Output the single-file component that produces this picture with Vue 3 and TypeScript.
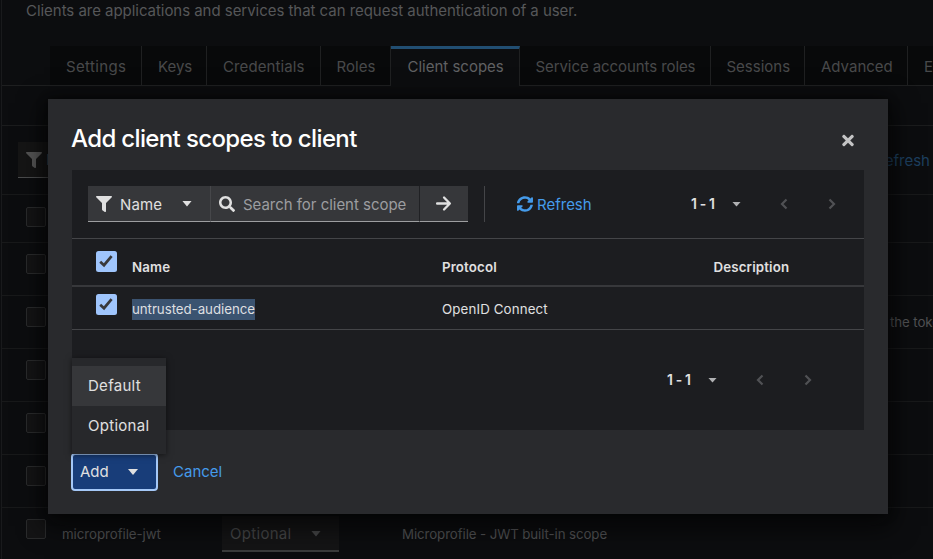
<script setup lang="ts">
import { ref } from 'vue'

interface Tab { label: string; key: string }
interface ScopeRow { name?: string; type?: string; description?: string; key: string }

const tabs: Tab[] = [
  { label: 'Settings', key: 'settings' },
  { label: 'Keys', key: 'keys' },
  { label: 'Credentials', key: 'credentials' },
  { label: 'Roles', key: 'roles' },
  { label: 'Client scopes', key: 'scopes' },
  { label: 'Service accounts roles', key: 'service' },
  { label: 'Sessions', key: 'sessions' },
  { label: 'Advanced', key: 'advanced' },
  { label: 'Events', key: 'events' },
]
const activeTab = ref('scopes')

const rows: ScopeRow[] = [
  { key: 'head' },
  { key: 'first' },
  { key: 'token', description: 'the token' },
  { key: 'r3' },
  { key: 'r4' },
  { key: 'r5' },
  { key: 'jwt', name: 'microprofile-jwt', type: 'Optional', description: 'Microprofile - JWT built-in scope' },
]

const addOptions = ['Default', 'Optional']
const highlighted = ref('Default')
const columns = ['Name', 'Protocol', 'Description']
</script>

<template>
  <div class="screen">
    <main class="page">
      <p class="subtitle"><span>Clients are applications and services that can request authentication of a user.</span></p>
      <nav class="tabs">
        <button
          v-for="tab in tabs"
          :key="tab.key"
          class="tab"
          :class="[`tab-${tab.key}`, { active: tab.key === activeTab }]"
          @click="activeTab = tab.key"
        >{{ tab.label }}</button>
      </nav>
      <div class="strip"></div>
      <div class="page-toolbar">
        <div class="page-filter">
          <svg class="filter-icon" viewBox="0 0 512 512"><path d="M488 0H24C3 0-8 26 7 41l185 185v206c0 8 4 15 10 20l80 56c16 11 38 0 38-20V226L505 41c15-15 4-41-17-41z" /></svg>
          <span>Name</span>
        </div>
        <span class="page-refresh">Refresh</span>
      </div>
      <div v-for="row in rows" :key="row.key" class="scope-row" :class="`row-${row.key}`">
        <span class="ghost-box"></span>
        <span class="scope-name">{{ row.name }}</span>
        <span v-if="row.type" class="scope-type">{{ row.type }}<i class="caret"></i></span>
        <span v-if="row.description" class="scope-desc">{{ row.description }}</span>
      </div>
    </main>

    <section class="modal" role="dialog">
      <header class="modal-head">
        <h1>Add client scopes to client</h1>
        <svg class="close" viewBox="0 0 352 512"><path d="M243 256l100-100c12-12 12-32 0-44l-22-23c-13-12-33-12-45 0L176 189 76 89c-12-12-32-12-45 0L9 112c-12 12-12 32 0 44l100 100L9 356c-12 12-12 32 0 45l22 22c13 12 33 12 45 0l100-100 100 100c12 12 32 12 45 0l22-22c12-13 12-33 0-45z" /></svg>
      </header>

      <div class="panel">
        <div class="toolbar">
          <div class="control filter">
            <svg class="filter-icon" viewBox="0 0 512 512"><path d="M488 0H24C3 0-8 26 7 41l185 185v206c0 8 4 15 10 20l80 56c16 11 38 0 38-20V226L505 41c15-15 4-41-17-41z" /></svg>
            <span class="filter-label">Name</span>
            <i class="caret"></i>
          </div>
          <div class="control search">
            <svg class="search-icon" viewBox="0 0 512 512"><path d="M505 443L405 343c-4-4-10-7-17-7h-16c28-35 44-80 44-128C416 93 323 0 208 0S0 93 0 208s93 208 208 208c48 0 93-16 128-44v16c0 7 3 13 7 17l100 100c9 9 24 9 34 0l28-28c9-10 9-25 0-34zM208 336c-71 0-128-57-128-128S137 80 208 80s128 57 128 128-57 128-128 128z" /></svg>
            <span class="placeholder">Search for client scope</span>
          </div>
          <div class="control go">
            <svg class="arrow" viewBox="0 0 16 16"><path d="M2 8h11.500M8.500 2.400l5.500 5.600-5.500 5.600" /></svg>
          </div>
          <span class="divider"></span>
          <button class="refresh">
            <svg viewBox="0 0 512 512"><path d="M371 133c-33-31-76-47-121-47-82 0-153 56-172 134-1 6-6 10-12 10H9c-7 0-13-7-12-14C19 96 127 8 256 8c69 0 131 27 178 71l36-36c15-15 41-4 41 17v134c0 13-11 24-24 24H353c-21 0-32-26-17-41zM25 296h134c21 0 32 26 17 41l-41 41c32 31 75 48 120 48 78 0 150-54 171-134 2-6 7-10 12-10h57c8 0 14 7 12 14-22 120-125 208-251 208-69 0-131-27-178-71l-37 36C26 484 1 473 1 452V320c0-13 11-24 24-24z" /></svg>
            <span>Refresh</span>
          </button>
          <div class="pager">
            <b>1 - 1</b><i class="caret"></i>
            <svg class="angle" viewBox="0 0 8 12"><path d="M6.500 1.500L2 6l4.500 4.500" /></svg>
            <svg class="angle" viewBox="0 0 8 12"><path d="M1.500 1.500L6 6l-4.500 4.500" /></svg>
          </div>
        </div>

        <div class="grid-row grid-head">
          <span class="check"><svg viewBox="0 0 16 16"><path d="M2.200 8.700l3.800 3.500 7.600-9" /></svg></span>
          <b v-for="column in columns" :key="column" :class="`col-${column.toLowerCase()}`">{{ column }}</b>
        </div>
        <div class="grid-row grid-item">
          <span class="check"><svg viewBox="0 0 16 16"><path d="M2.200 8.700l3.800 3.500 7.600-9" /></svg></span>
          <span><mark>untrusted-audience</mark></span>
          <span class="protocol">OpenID Connect</span>
          <span></span>
        </div>

        <div class="bottom">
          <div class="pager">
            <b>1 - 1</b><i class="caret"></i>
            <svg class="angle" viewBox="0 0 8 12"><path d="M6.500 1.500L2 6l4.500 4.500" /></svg>
            <svg class="angle" viewBox="0 0 8 12"><path d="M1.500 1.500L6 6l-4.500 4.500" /></svg>
          </div>
        </div>
      </div>

      <footer class="actions">
        <div class="add-wrap">
          <button class="add"><span>Add</span><i class="caret"></i></button>
          <ul class="menu">
            <li
              v-for="option in addOptions"
              :key="option"
              :class="{ highlighted: option === highlighted }"
              @mouseenter="highlighted = option"
            >{{ option }}</li>
          </ul>
        </div>
        <button class="cancel">Cancel</button>
      </footer>
    </section>
  </div>
</template>

<style>
body { background: #0c0d0f; overflow: hidden; }
</style>

<style scoped>
* { box-sizing: border-box; }
.screen {
  position: relative;
  width: 933px;
  height: 559px;
  overflow: hidden;
  background: #0c0d0f;
  font: 15px/24px Inter, "Liberation Sans", sans-serif;
  color: #e0e0e0;
}
button { font: inherit; color: inherit; background: none; border: 0; padding: 0; margin: 0; text-align: left; white-space: nowrap; }
svg { display: block; flex: none; fill: currentColor; }
.caret {
  display: block;
  flex: none;
  width: 10px;
  height: 6px;
  background: currentColor;
  clip-path: polygon(0 0, 100% 0, 50% 100%);
}

.page { height: 559px; margin-left: 1px; border-left: 1px solid #191a1c; color: #58595b; }
.subtitle { margin: 0; height: 46px; padding: 0 0 0 24px; line-height: 21px; letter-spacing: -0.040px; white-space: nowrap; color: #565759; }
.tabs { display: flex; height: 40px; padding-left: 48px; border-bottom: 1px solid #1e1f20; }
.tab { flex: none; height: 39px; padding-left: 16px; padding-top: 1px; line-height: 39px; background: #08090a; border-right: 1px solid #1f2021; color: #48494b; overflow: hidden; }
.tab.active { height: 40px; padding-top: 0; background: #0c0d0f; border-top: 3px solid #214e72; line-height: 35px; padding-bottom: 2px; padding-left: 16.500px; color: #606163; }
.tab-settings { width: 92px; letter-spacing: 0.350px; }
.tab-keys { width: 65px; }
.tab-credentials { width: 114px; letter-spacing: 0.100px; }
.tab-roles { width: 70px; letter-spacing: 0.050px; padding-left: 15.500px; }
.tab-scopes { width: 129px; }
.tab-service { width: 191px; letter-spacing: -0.080px; padding-left: 15.500px; }
.tab-sessions { width: 94px; padding-left: 15.500px; }
.tab-advanced { width: 103px; }
.tab-events { width: 90px; }
.strip { height: 40px; border-bottom: 1px solid #1b1c1d; }
.page-toolbar { display: flex; justify-content: space-between; height: 69px; padding: 16px 3px 0 16px; border-bottom: 1px solid #18191a; }
.page-filter { display: flex; align-items: center; gap: 4px; width: 123px; height: 36px; padding-left: 8px; background: #151515; border-bottom: 1px solid #4b4c4d; }
.page-filter .filter-icon { fill: #555; }
.page-refresh { line-height: 37px; color: #1d3f5f; }
.scope-row { display: flex; height: 53px; padding: 12px 0 0 24px; border-bottom: 1px solid #18191a; white-space: nowrap; font-size: 13.300px; color: #505153; }
.row-head { height: 48px; }
.ghost-box { flex: none; width: 20px; height: 20px; margin-top: -1px; border: 1px solid #2a2b2c; border-radius: 2px; background: #141415; }
.row-head .ghost-box { margin-top: 0; }
.scope-name { flex: none; width: 186px; padding-left: 16px; line-height: 29px; letter-spacing: -0.060px; }
.scope-type { display: flex; flex: none; align-items: center; justify-content: space-between; width: 117px; height: 36px; margin: -4px 0 0 -10px; padding: 1px 18px 0 8px; color: #454647; background: #141415; border-bottom: 2px solid #3a3b3b; font-size: 15px; letter-spacing: 0.300px; }
.scope-desc { margin-left: 63px; line-height: 29px; letter-spacing: -0.100px; }
.row-token .scope-desc { margin-left: 658px; }
.row-jwt { border-bottom: 0; }

.modal {
  position: absolute;
  left: 48px;
  top: 99px;
  width: 840px;
  height: 415px;
  padding: 0 24px;
  background: #292a2d;
  box-shadow: 0 8px 24px 4px rgba(3, 3, 3, 0.7), 0 0 8px rgba(3, 3, 3, 0.5);
}
.modal-head { display: flex; align-items: center; justify-content: space-between; height: 71px; padding: 11px 10px 0 0; }
h1 { margin: -2px 0 0 -1px; font-size: 24px; font-weight: 500; line-height: 32px; letter-spacing: -0.640px; color: #fff; white-space: nowrap; }
.close { width: 12px; height: 17px; fill: #c4c4c5; }
.panel { height: 260px; background: #1c1d20; }
.toolbar { display: flex; height: 69px; padding: 16px 28px 0 16px; border-bottom: 1px solid #444548; }
.control { display: flex; flex: none; align-items: center; height: 36px; background: #36373a; border-bottom: 1px solid #9d9ea0; white-space: nowrap; }
.filter { width: 123px; padding-left: 8px; border-right: 1px solid #46474a; }
.filter-icon { width: 16px; height: 16px; }
.filter-label { width: 62px; margin-left: 8px; padding-top: 2px; letter-spacing: 0.150px; }
.search { width: 209px; padding-left: 8px; border-right: 1px solid #202124; }
.search-icon { width: 16px; height: 16px; }
.placeholder { margin-left: 8px; padding-top: 2px; letter-spacing: -0.030px; color: #9c9da0; }
.go { width: 48px; padding-left: 15px; }
.arrow { width: 17px; height: 17px; fill: none; stroke: currentColor; stroke-width: 2.200; stroke-linecap: round; stroke-linejoin: round; }
.divider { flex: none; width: 1px; height: 36px; margin-left: 16px; background: #444548; }
.refresh { display: flex; align-items: center; gap: 4px; height: 36px; margin-left: 32px; color: #459bea; }
.refresh svg { width: 16px; height: 16px; }
.refresh span { padding-top: 1px; }
.pager { display: flex; align-items: center; height: 36px; margin-left: auto; white-space: nowrap; }
.pager b { width: 42px; padding-left: 1px; font-size: 14px; font-weight: 600; letter-spacing: -0.400px; }
.pager .caret { width: 9px; height: 5px; color: #b0b1b3; margin-right: 39px; }
.angle { width: 8px; height: 12px; fill: none; stroke: #505154; stroke-width: 2.200; }
.angle + .angle { margin-left: 40px; }
.grid-row { display: grid; grid-template-columns: 36px 310px 271.500px 1fr; padding-left: 24px; font-size: 13.300px; }
.grid-head { height: 48px; border-bottom: 2px solid #37383b; line-height: 57px; }
.grid-head b { font-weight: 600; letter-spacing: 0.150px; }
.grid-item { height: 43px; border-bottom: 1px solid #444548; line-height: 45px; }
.protocol { letter-spacing: 0.130px; }
.check { display: flex; align-items: center; justify-content: center; width: 21px; height: 21px; margin: 11.500px 0 0 -0.500px; background: #9fc5fc; border-radius: 2.500px; }
.grid-item .check { margin-top: 7px; }
.check svg { width: 16px; height: 16px; margin-top: -1px; fill: none; stroke: #38383a; stroke-width: 2.700; }
mark { display: inline-block; height: 21px; line-height: 21px; letter-spacing: -0.050px; background: #3b5370; color: #dedfe0; }
.bottom { display: flex; height: 99px; padding: 32px 52px 0 0; }
.actions { display: flex; align-items: center; height: 84px; }
.add-wrap { position: relative; width: 86px; height: 36px; }
.add { display: flex; align-items: center; width: 85px; height: 36px; padding-left: 8px; background: #183d79; border-radius: 3px; outline: 2px solid #a5c8f7; outline-offset: -1px; }
.add span { width: 48px; }
.menu { position: absolute; left: 0; bottom: 36px; width: 94px; margin: 0; padding: 8px 0; list-style: none; background: #27282b; box-shadow: 0 1px 6px rgba(0, 0, 0, 0.55); }
.menu li { height: 40px; padding-left: 16px; line-height: 40px; letter-spacing: 0.280px; }
.menu .highlighted { background: #36373a; }
.cancel { margin-left: 15px; color: #459bea; }
</style>
